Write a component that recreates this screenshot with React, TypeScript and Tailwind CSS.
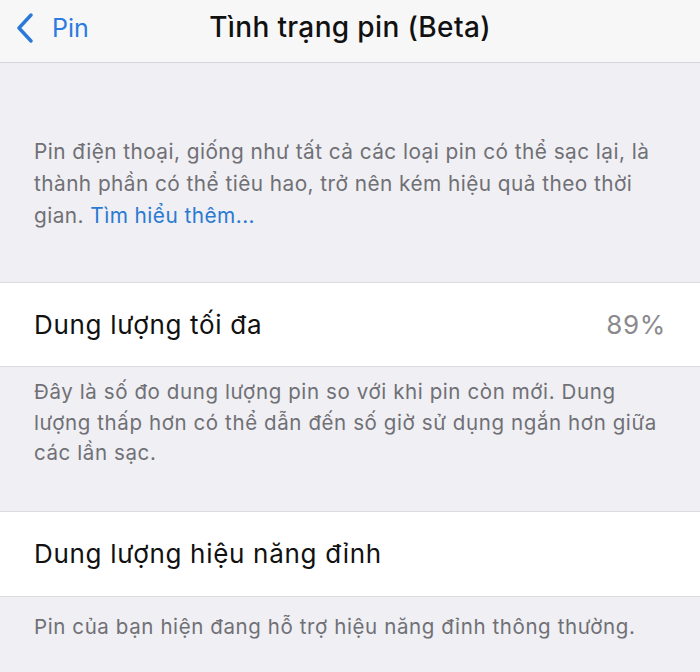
import React from 'react';

const font = { fontFamily: 'Inter, "Noto Sans", sans-serif' };

const BatteryHealth: React.FC = () => {
  return (
    <div className="w-[700px] h-[672px] overflow-hidden bg-[#efeff4]" style={font}>
      {/* Nav bar */}
      <div className="relative h-[63px] bg-[#f7f7f8] border-b border-[#d6d6da] flex items-center justify-center">
        <button className="absolute left-[16px] top-0 h-[56px] flex items-center gap-[18px] text-[#2c7be0]">
          <svg width="18" height="30" viewBox="0 0 18 30" fill="none">
            <path d="M15 2 L3 15 L15 28" stroke="#2a78d8" strokeWidth="3.4" strokeLinecap="round" strokeLinejoin="round" />
          </svg>
          <span className="text-[25px] leading-none">Pin</span>
        </button>
        <h1 className="-mt-[8px] text-[28px] font-medium text-[#111] tracking-[0.36px]">Tình trạng pin (Beta)</h1>
      </div>

      {/* Intro */}
      <div className="pt-[73px] px-[34px] text-[20.8px] leading-[32px] tracking-[0.45px] text-[#707075] whitespace-nowrap">
        <p>Pin điện thoại, giống như tất cả các loại pin có thể sạc lại, là</p>
        <p>thành phần có thể tiêu hao, trở nên kém hiệu quả theo thời</p>
        <p>
          gian. <span className="text-[#2a7ad2]">Tìm hiểu thêm...</span>
        </p>
      </div>

      {/* Maximum capacity */}
      <div className="mt-[50px] h-[85px] bg-white border-y border-[#dcdce0] flex items-center justify-between px-[34px] text-[26px] tracking-[0.7px]">
        <span className="text-[#111]">Dung lượng tối đa</span>
        <span className="text-[#8a8a8e]">89%</span>
      </div>
      <div className="pt-[10px] px-[34px] text-[20.5px] leading-[30.5px] tracking-[0.6px] text-[#707075] whitespace-nowrap">
        <p>Đây là số đo dung lượng pin so với khi pin còn mới. Dung</p>
        <p>lượng thấp hơn có thể dẫn đến số giờ sử dụng ngắn hơn giữa</p>
        <p>các lần sạc.</p>
      </div>

      {/* Peak performance */}
      <div className="mt-[42px] h-[86px] bg-white border-y border-[#dcdce0] flex items-center px-[34px] text-[26px] tracking-[0.7px]">
        <span className="text-[#111]">Dung lượng hiệu năng đỉnh</span>
      </div>
      <div className="pt-[14px] px-[34px] text-[20.5px] leading-[31px] tracking-[0.6px] text-[#707075] whitespace-nowrap">
        <p>Pin của bạn hiện đang hỗ trợ hiệu năng đỉnh thông thường.</p>
      </div>
    </div>
  );
};

export default function App() {
  return <BatteryHealth />;
}
